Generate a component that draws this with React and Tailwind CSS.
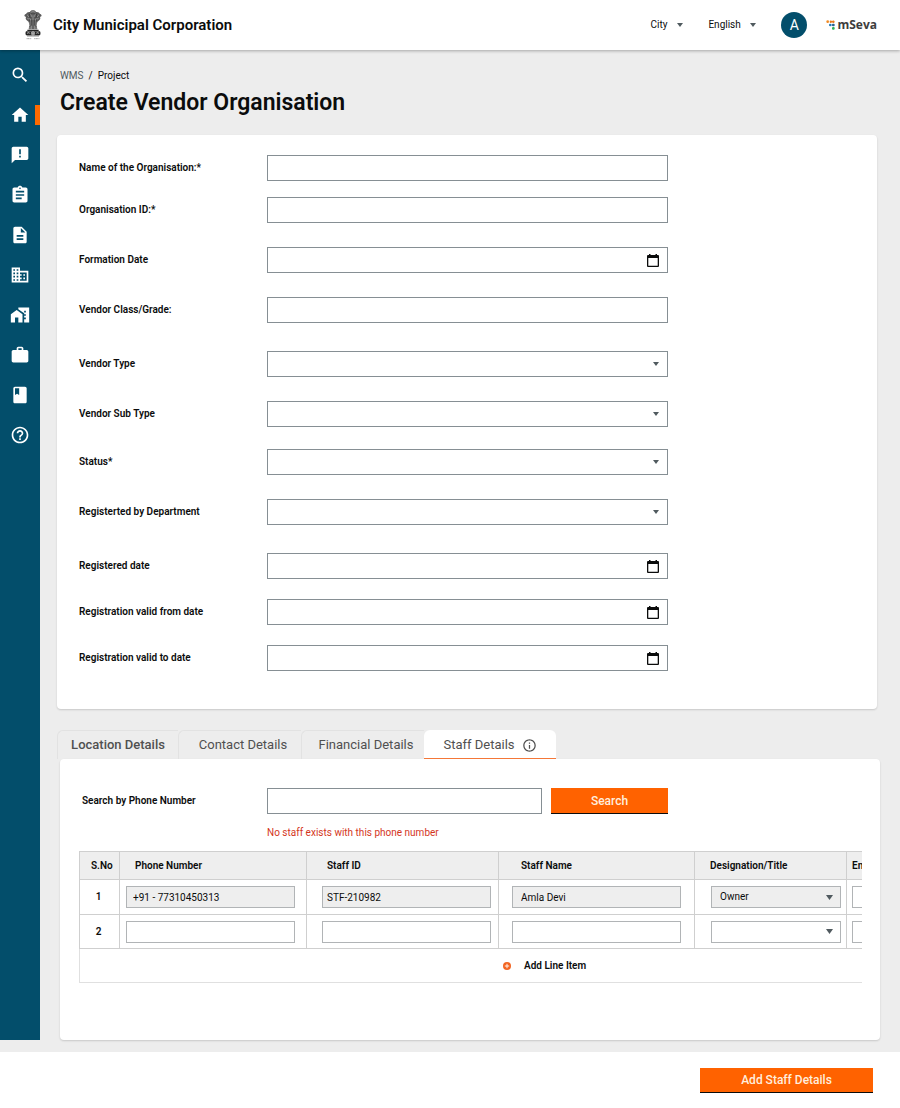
import {
  MdSearch, MdHome, MdAnnouncement, MdAssignment, MdDescription, MdBusiness, MdHomeWork,
  MdWork, MdBook, MdHelpOutline, MdInfoOutline,
} from "react-icons/md";

function Caret({ className }) {
  return (
    <svg viewBox="0 0 6 4" preserveAspectRatio="none" className={`pointer-events-none fill-[#505a5f] ${className}`} aria-hidden="true">
      <path d="M0 0h6L3 4z" />
    </svg>
  );
}

function Emblem() {
  return (
    <svg viewBox="0 0 54 90" className="h-[30px] w-[18px]" role="img" aria-label="Emblem">
      <path fill="#5a5a5a" d="M27 1c5 0 8 2 9 5 6-1 10 2 12 6 4 1 6 4 4 7l-4 2c3 5-1 10-5 12l-4 5c-2 6 0 12 1 20H14c1-8 3-14 1-20l-4-5c-4-2-8-7-5-12l-4-2c-2-3 0-6 4-7 2-4 6-7 12-6 1-3 4-5 9-5z" />
      <g fill="none" stroke="#c9c9c9" strokeWidth="1.6">
        <path d="M20 8c3-4 11-4 14 0M19 14c4 3 12 3 16 0M22 19c3 3 7 3 10 0M9 15c3 1 5 3 5 6M45 15c-3 1-5 3-5 6M10 25c3 2 5 2 7 0M44 25c-3 2-5 2-7 0" />
        <path d="M20 26c-2 7 1 12 0 18M34 26c2 7-1 12 0 18M27 24v22M14 34c3 4 2 8 3 14M40 34c-3 4-2 8-3 14M18 50v8M23 47v11M31 47v11M36 50v8" />
      </g>
      <g fill="none" stroke="#262626" strokeWidth="1.6">
        <path d="M22 11h3M29 11h3M25 16h4M17 12c-2 4-1 8 2 12M37 12c2 4 1 8-2 12M17 30c2 4 1 9 1 14M37 30c-2 4-1 9-1 14M24 30v16M30 30v16" />
      </g>
      <path fill="#222" d="M10 59h34v4H10zM6 64h42c2 3 2 9 0 12H6c-2-3-2-9 0-12zM9 77h36v2H9z" />
      <circle cx="27" cy="70" r="5" fill="#333" stroke="#fff" strokeWidth="1.5" />
      <path stroke="#fff" strokeWidth="1" d="M27 65v10M22 70h10M23.500 66.500l7 7M30.500 66.500l-7 7" />
      <path fill="none" stroke="#ddd" strokeWidth="1.600" d="M9 72c2-4 6-4 9-1M36 71c3-3 7-3 9 1M10 67h6M38 67h6" />
      <path stroke="#777" strokeWidth="2.400" strokeDasharray="3 1.500" d="M8 86h14M31 86h15" />
    </svg>
  );
}

function Logo() {
  return (
    <a href="#home" className="flex items-center gap-0.5 font-['Open_Sans',sans-serif] text-xs leading-4 font-bold text-[#3d3d3d]">
      <svg viewBox="0 0 27 30" className="h-[10px] w-[9px]" aria-hidden="true">
        <circle cx="5" cy="5" r="4" fill="#f08a24" />
        <path d="M11 5c0-4 5-5 7-2 2-3 8-2 8 2s-6 5-8 2c-2 3-7 2-7-2z" fill="#e97a1c" />
        <circle cx="13" cy="15" r="4" fill="#1f7ab8" />
        <rect x="18" y="11" width="8" height="8" rx="3" fill="#2c5f8c" />
        <rect x="18" y="21" width="8" height="8" rx="3" fill="#2fb25a" />
      </svg>
      mSeva
    </a>
  );
}

function HeaderSelect({ label, value, className }) {
  return (
    <div className={`relative flex items-center ${className}`}>
      <select aria-label={label} className="w-full appearance-none bg-transparent text-[10px] leading-4 text-[#0b0c0c]">
        <option>{value}</option>
      </select>
      <Caret className="absolute right-0 h-1 w-1.5" />
    </div>
  );
}

const sideItems = [
  ["Search", MdSearch], ["Home", MdHome], ["Complaints", MdAnnouncement], ["Assignments", MdAssignment],
  ["Documents", MdDescription], ["Buildings", MdBusiness], ["Property", MdHomeWork],
  ["Works", MdWork], ["Records", MdBook], ["Help", MdHelpOutline],
];

function Sidebar() {
  return (
    <nav aria-label="Modules" className="flex w-10 shrink-0 flex-col bg-[#034e6b] pt-[5px]">
      {sideItems.map(([name, Icon]) => (
        <a key={name} href={`#${name.toLowerCase()}`} aria-label={name} className="relative flex h-10 items-center justify-center text-white">
          <Icon size={20} />
          {name === "Home" && <span className="absolute right-0 h-5 w-[5px] bg-[#ff6a00]" />}
        </a>
      ))}
    </nav>
  );
}

const fields = [
  { id: "name", label: "Name of the Organisation:*", type: "text", gap: "" },
  { id: "orgid", label: "Organisation ID:*", type: "text", gap: "mt-4" },
  { id: "formed", label: "Formation Date", type: "date", gap: "mt-6" },
  { id: "grade", label: "Vendor Class/Grade:", type: "text", gap: "mt-6" },
  { id: "vtype", label: "Vendor Type", type: "select", gap: "mt-7" },
  { id: "vsub", label: "Vendor Sub Type", type: "select", gap: "mt-6" },
  { id: "status", label: "Status*", type: "select", gap: "mt-[22px]" },
  { id: "dept", label: "Registerted by Department", type: "select", gap: "mt-6" },
  { id: "regdate", label: "Registered date", type: "date", gap: "mt-7" },
  { id: "from", label: "Registration valid from date", type: "date", gap: "mt-5" },
  { id: "to", label: "Registration valid to date", type: "date", gap: "mt-5" },
];

function Field({ id, label, type, gap }) {
  return (
    <div className={`flex items-center ${gap}`}>
      <label htmlFor={id} className="w-[188px] shrink-0 text-[10px] leading-4 font-semibold">{label}</label>
      <div className="relative flex h-[26px] w-full max-w-[401px] items-center border border-[#868f94] bg-white">
        {type === "select" ? (
          <>
            <select id={id} className="h-full w-full appearance-none bg-transparent px-2 text-[10px]">
              <option></option>
            </select>
            <Caret className="absolute right-2 h-1 w-1.5" />
          </>
        ) : (
          <input id={id} type="text" className="h-full w-full min-w-0 bg-transparent px-2 text-[10px]" />
        )}
        {type === "date" && (
          <button type="button" aria-label={`Choose ${label}`} className="mr-2 shrink-0">
            <svg viewBox="0 0 12 13" className="h-[13px] w-3" aria-hidden="true">
              <path fill="#0b0c0c" d="M2 0h1.500v1h5V0H10v1h1a1 1 0 0 1 1 1v10a1 1 0 0 1-1 1H1a1 1 0 0 1-1-1V2a1 1 0 0 1 1-1h1zM1.300 4v7.700h9.400V4z" />
            </svg>
          </button>
        )}
      </div>
    </div>
  );
}

const tabs = [
  { name: "Location Details", cls: "w-[121px] font-medium" },
  { name: "Contact Details", cls: "w-[123px] pl-1.5" },
  { name: "Financial Details", cls: "w-[123px] pl-1.5" },
];

function Tabs() {
  return (
    <div role="tablist" className="ml-[17px] flex h-[29px] text-[13px] leading-4 text-[#505050]">
      {tabs.map((t) => (
        <button key={t.name} type="button" role="tab" aria-selected="false" className={`rounded-tl-md border-t border-l border-[#e2e2e2] whitespace-nowrap ${t.cls}`}>
          {t.name}
        </button>
      ))}
      <button type="button" role="tab" aria-selected="true" className="flex w-[132px] items-center justify-center gap-[7px] rounded-t-md border-b border-[#f47738] bg-white pt-0.5 whitespace-nowrap">
        Staff Details
        <MdInfoOutline size={15} />
      </button>
    </div>
  );
}

const cell = "border border-[#cfcfcf]";
const box = "block h-[22px] border border-[#b1b4b6] text-[10px] leading-4 text-[#0b0c0c]";

function StaffRow({ no, phone, id, name, title }) {
  const bg = phone ? "bg-[#eeeeee]" : "bg-white";
  return (
    <tr className={phone ? "h-[35px]" : "h-[34px]"}>
      <th scope="row" className={`${cell} pr-0.5 font-semibold`}>{no}</th>
      <td className={`${cell} pl-1.5`}><input aria-label={`Phone number ${no}`} defaultValue={phone} className={`${box} ${bg} w-[169px] px-1.5`} /></td>
      <td className={`${cell} pl-[15px]`}><input aria-label={`Staff ID ${no}`} defaultValue={id} className={`${box} ${bg} w-[169px] px-1`} /></td>
      <td className={`${cell} pl-[13px]`}><input aria-label={`Staff name ${no}`} defaultValue={name} className={`${box} ${bg} w-[169px] px-2`} /></td>
      <td className={`${cell} pl-4`}>
        <div className="relative flex w-[130px] items-center">
          <select aria-label={`Designation ${no}`} className={`${box} ${bg} w-full appearance-none px-2`}>
            <option>{title}</option>
          </select>
          <Caret className="absolute right-2 h-[5px] w-[7px]" />
        </div>
      </td>
      <td className={`${cell} pl-[5px]`}><input aria-label={`Email ${no}`} className={`${box} w-[169px] bg-white px-2`} /></td>
    </tr>
  );
}

function StaffTable() {
  const th = `${cell} text-left font-semibold`;
  return (
    <div className="mr-[18px] ml-[19px] overflow-x-auto [scrollbar-width:none]">
      <table className="w-[960px] table-fixed border-collapse text-[10px] leading-4">
        <colgroup>
          <col className="w-10" /><col className="w-[187px]" /><col className="w-[192px]" />
          <col className="w-[196px]" /><col className="w-[152px]" /><col />
        </colgroup>
        <thead>
          <tr className="h-7 bg-[#eeeeee]">
            <th className={`${th} pl-[11px]`}>S.No</th>
            <th className={`${th} pl-[15px]`}>Phone Number</th>
            <th className={`${th} pl-5`}>Staff ID</th>
            <th className={`${th} pl-[22px]`}>Staff Name</th>
            <th className={`${th} pl-[15px]`}>Designation/Title</th>
            <th className={`${th} pl-[5px]`}>Email ID</th>
          </tr>
        </thead>
        <tbody>
          <StaffRow no={1} phone="+91 - 77310450313" id="STF-210982" name="Amla Devi" title="Owner" />
          <StaffRow no={2} phone="" id="" name="" title="" />
          <tr className="h-[34px]">
            <td colSpan={6} className="border border-[#e0e0e0]">
              <button type="button" className="ml-[423px] flex items-center gap-[13px] font-semibold">
                <svg viewBox="0 0 8 8" className="size-2" aria-hidden="true">
                  <circle cx="4" cy="4" r="4" fill="#f26522" />
                  <path d="M4 1.800v4.400M1.800 4h4.400" stroke="#fff" strokeWidth="0.900" />
                </svg>
                Add Line Item
              </button>
            </td>
          </tr>
        </tbody>
      </table>
    </div>
  );
}

export default function App() {
  return (
    <div className="flex min-h-screen flex-col bg-white font-[Roboto,sans-serif] text-[#0b0c0c]">
      <header className="relative z-10 flex h-[50px] items-center bg-white pr-[23px] pl-6 shadow-[0_1px_3px_rgba(0,0,0,0.3)]">
        <Emblem />
        <p className="ml-[11px] text-[15px] leading-5 font-semibold">City Municipal Corporation</p>
        <HeaderSelect label="City" value="City" className="ml-auto w-[33px]" />
        <HeaderSelect label="Language" value="English" className="ml-[25px] w-12" />
        <button type="button" aria-label="Account" className="mr-[19px] ml-[25px] size-[26px] rounded-full bg-[#034e6b] text-sm text-white">A</button>
        <Logo />
      </header>

      <div className="flex bg-[#ededed] pb-3">
        <Sidebar />
        <main className="min-w-0 flex-1">
          <nav aria-label="Breadcrumb" className="mt-[18px] ml-5 flex gap-[5px] text-[10px] leading-4">
            <a href="#wms" className="text-[#505a5f]">WMS</a>
            <span>/</span>
            <span>Project</span>
          </nav>
          <h1 className="mt-[3px] mb-4 ml-5 text-[23px] leading-8 font-semibold">Create Vendor Organisation</h1>

          <form className="mr-[23px] ml-[17px] rounded-sm bg-white pt-5 pb-[38px] pl-[22px] shadow-[0_1px_2px_rgba(0,0,0,0.16)]">
            {fields.map((f) => <Field key={f.id} {...f} />)}
          </form>

          <section className="mt-[21px]">
            <Tabs />
            <div className="mr-5 ml-5 rounded-sm bg-white pt-[29px] pb-[57px] shadow-[0_1px_2px_rgba(0,0,0,0.16)]">
              <div className="flex items-center pl-[22px]">
                <label htmlFor="search" className="w-[185px] shrink-0 text-[10px] leading-4 font-semibold">Search by Phone Number</label>
                <input id="search" type="text" className="h-[26px] w-[275px] border border-[#868f94] px-2 text-[10px]" />
                <button type="button" className="ml-[9px] h-[26px] w-[117px] border-b border-[#0b0c0c] bg-[#ff6200] text-xs font-medium text-[#ffeede]">Search</button>
              </div>
              <p className="mt-[11px] mb-2.5 ml-[207px] text-[10px] leading-4 text-[#d4351c]">No staff exists with this phone number</p>
              <StaffTable />
            </div>
          </section>
        </main>
      </div>

      <footer className="flex justify-end bg-white pt-4 pr-[27px] pb-[15px]">
        <button type="button" className="h-[25px] w-[173px] border-b border-[#0b0c0c] bg-[#ff6200] text-xs font-medium text-[#ffeede]">Add Staff Details</button>
      </footer>
    </div>
  );
}
